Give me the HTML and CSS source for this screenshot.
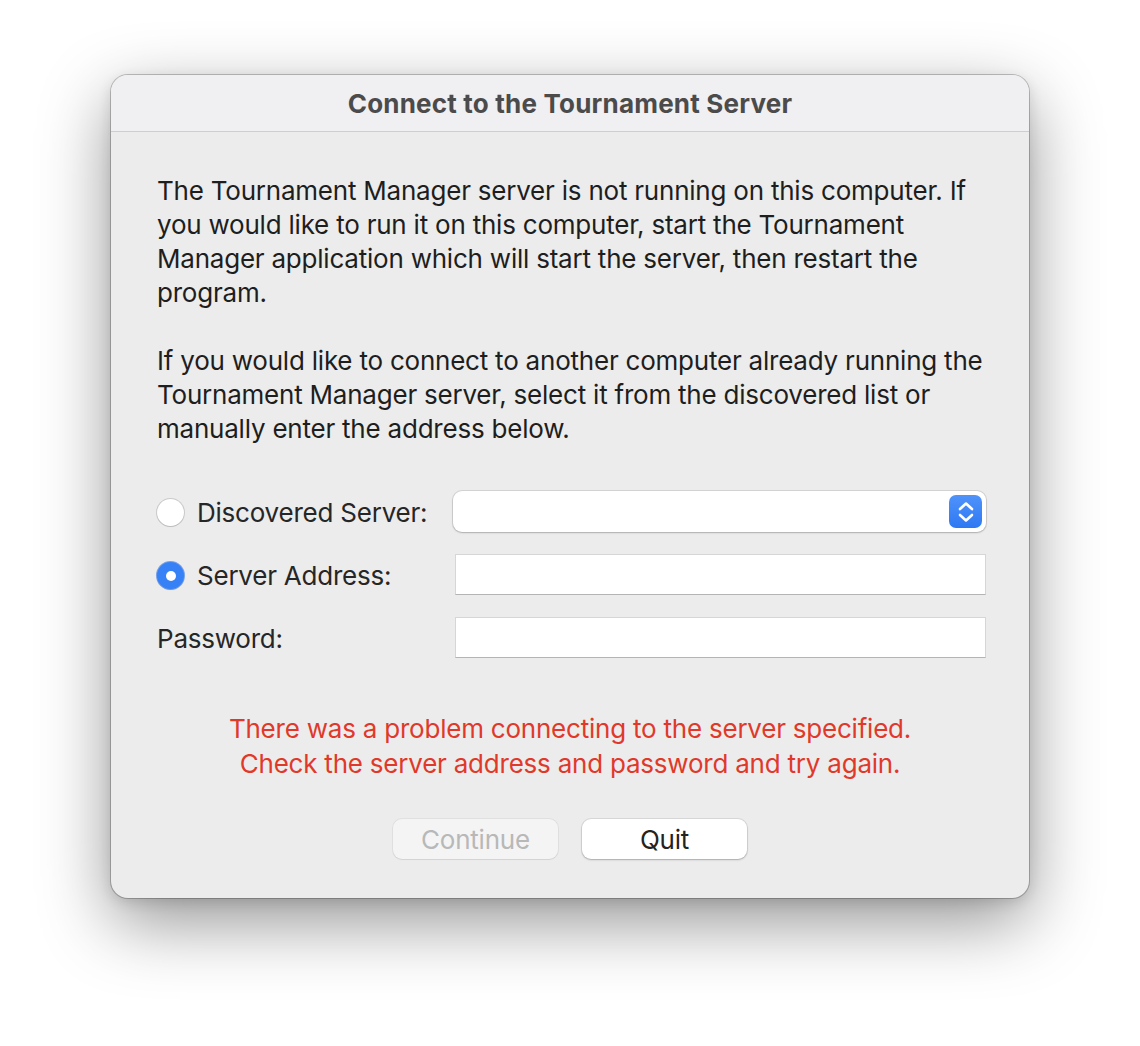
FILE: index.html
```html
<!DOCTYPE html>
<html>
<head>
<meta charset="utf-8">
<link rel="stylesheet" href="styles.css">
</head>
<body>
<div class="window">
  <div class="titlebar">Connect to the Tournament Server</div>
  <div class="content">
    <p class="para">The Tournament Manager server is not running on this computer. If<br>you would like to run it on this computer, start the Tournament<br>Manager application which will start the server, then restart the<br>program.</p>
    <p class="para second">If you would like to connect to another computer already running the<br>Tournament Manager server, select it from the discovered list or<br>manually enter the address below.</p>
    <div class="form">
      <div class="label"><span class="radio"></span><span>Discovered Server:</span></div>
      <div class="popup">
        <span class="stepper">
          <svg width="20" height="28" viewBox="0 0 20 28"><path d="M4 11 L10 5.5 L16 11" fill="none" stroke="#fff" stroke-width="2.6" stroke-linecap="round" stroke-linejoin="round"/><path d="M4 17 L10 22.5 L16 17" fill="none" stroke="#fff" stroke-width="2.6" stroke-linecap="round" stroke-linejoin="round"/></svg>
        </span>
      </div>
      <div class="label"><span class="radio on"></span><span>Server Address:</span></div>
      <div class="field"></div>
      <div class="label plain">Password:</div>
      <div class="field"></div>
    </div>
    <p class="error">There was a problem connecting to the server specified.<br>Check the server address and password and try again.</p>
    <div class="buttons">
      <button class="btn disabled">Continue</button>
      <button class="btn">Quit</button>
    </div>
  </div>
</div>
</body>
</html>
```
FILE: styles.css
```css
html, body {
  margin: 0;
  padding: 0;
  background: #ffffff;
}
body {
  width: 1140px;
  height: 1046px;
  font-family: Inter, "Noto Sans", sans-serif;
  overflow: hidden;
}
.window {
  margin: 75px 0 0 111px;
  width: 918px;
  height: 823px;
  box-sizing: border-box;
  border-radius: 17px;
  background: #ececec;
  box-shadow: 0 0 0 1px rgba(0,0,0,0.22), 0 24px 70px rgba(0,0,0,0.42), 0 4px 14px rgba(0,0,0,0.12);
  overflow: hidden;
  display: flex;
  flex-direction: column;
}
.titlebar {
  height: 57px;
  flex: none;
  background: #f0eff2;
  border-bottom: 1px solid #cfcdd0;
  display: flex;
  align-items: center;
  justify-content: center;
  font-weight: 700;
  font-size: 26px;
  color: #4b4b4b;
  letter-spacing: 0.2px;
  padding-top: 1px;
  box-sizing: border-box;
}
.content {
  padding: 42px 30px 0 46px;
  color: #1e1e1e;
  font-size: 26px;
  letter-spacing: -0.22px;
}
.para {
  margin: 0;
  line-height: 34px;
  white-space: nowrap;
}
.para.second {
  margin-top: 34px;
}
.form {
  margin-top: 45px;
  display: grid;
  grid-template-columns: 296px 533px;
  grid-auto-rows: 41px;
  row-gap: 22px;
  align-items: center;
}
.label {
  display: flex;
  align-items: center;
  gap: 13px;
  color: #262626;
  padding-top: 2px;
}
.radio {
  width: 27px;
  height: 27px;
  border-radius: 50%;
  background: #ffffff;
  box-shadow: 0 0 0 1px rgba(0,0,0,0.14), 0 1px 1px rgba(0,0,0,0.08);
  box-sizing: border-box;
  flex: none;
  margin-left: 0;
}
.radio.on {
  background: #3781f7;
  box-shadow: 0 0 0 1px rgba(40,110,230,0.6), 0 1px 1px rgba(0,0,0,0.12);
  display: flex;
  align-items: center;
  justify-content: center;
}
.radio.on::after {
  content: "";
  width: 10px;
  height: 10px;
  border-radius: 50%;
  background: #fff;
}
.popup {
  height: 41px;
  background: #fff;
  border-radius: 9px;
  box-shadow: 0 0 0 1px rgba(0,0,0,0.1), 0 1px 2px rgba(0,0,0,0.18);
  display: flex;
  align-items: center;
  justify-content: flex-end;
  padding-right: 4px;
  box-sizing: border-box;
}
.stepper {
  width: 33px;
  height: 33px;
  border-radius: 7px;
  background: linear-gradient(#4f93fa, #2e78f3);
  display: flex;
  align-items: center;
  justify-content: center;
}
.field {
  height: 41px;
  width: 531px;
  margin-left: 2px;
  background: #fff;
  border: 1px solid #d6d6d6;
  border-bottom-color: #b4b4b4;
  box-sizing: border-box;
}
.error {
  margin: 53px 12px 0 -4px;
  text-align: center;
  color: #e0392a;
  line-height: 35px;
  white-space: nowrap;
}
.buttons {
  margin: 38px 12px 0 -4px;
  display: flex;
  justify-content: center;
  gap: 24px;
}
.btn {
  width: 165px;
  height: 40px;
  border: none;
  border-radius: 9px;
  background: #fff;
  font-family: inherit;
  font-size: 26px;
  letter-spacing: -0.22px;
  color: #232323;
  box-shadow: 0 0 0 1px rgba(0,0,0,0.08), 0 1px 2px rgba(0,0,0,0.22);
  padding: 0;
}
.btn.disabled {
  background: #f4f4f4;
  color: #b8b8b8;
  box-shadow: 0 0 0 1px rgba(0,0,0,0.05), 0 1px 1px rgba(0,0,0,0.06);
}
```
